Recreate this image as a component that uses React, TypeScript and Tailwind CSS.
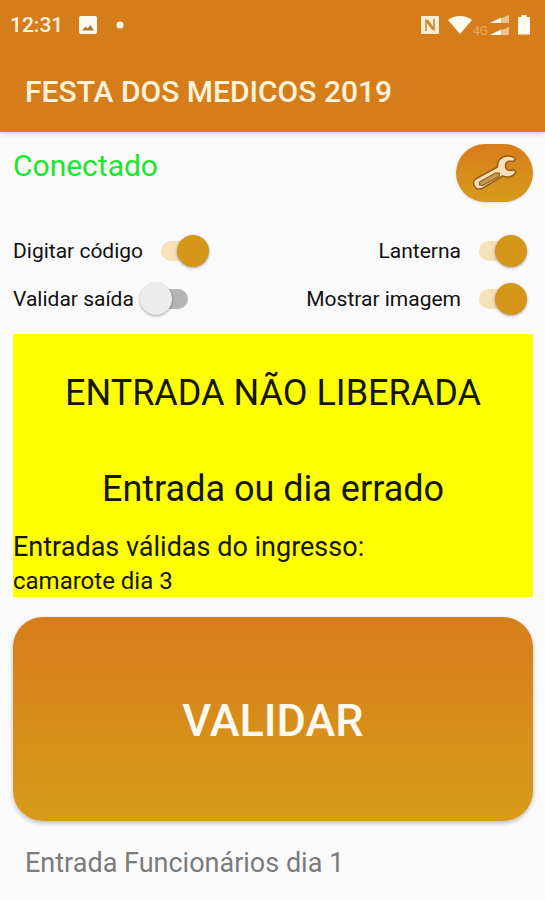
import { useState } from "react";

const switches = [
  { id: "digitar", label: "Digitar código", on: true, side: "justify-start" },
  { id: "lanterna", label: "Lanterna", on: true, side: "justify-end" },
  { id: "saida", label: "Validar saída", on: false, side: "justify-start" },
  { id: "imagem", label: "Mostrar imagem", on: true, side: "justify-end" },
];

const StatusBar = () => {
  return (
    <div className="flex h-[50px] items-center justify-between pl-[10px] pr-[14px] text-white">
      <div className="flex items-center gap-4">
        <span className="text-[21px] leading-6 font-medium text-[#fff3dc]">12:31</span>
        <svg width="18" height="18" viewBox="0 0 18 18">
          <rect width="18" height="18" rx="2" fill="#fffaf0" />
          <path d="M3 14.500l3.500-4 2 2 3-3.500 3.500 5.500z" fill="#a8763a" />
        </svg>
        <svg width="12" height="20" viewBox="0 0 12 20">
          <circle cx="7" cy="10" r="3.500" fill="#fffaf0" />
        </svg>
      </div>

      <div className="flex items-center">
        <svg width="18" height="18" viewBox="0 0 18 18" fill="none">
          <rect width="18" height="18" rx="1" fill="#ffeed2" />
          <path d="M5 15V4.500l7 9" stroke="#c98434" strokeWidth="1.500" />
          <path d="M13 3v10.500L6.500 4" stroke="#c98434" strokeWidth="1.500" />
        </svg>
        <svg className="ml-2" width="26" height="20" viewBox="0 0 26 20">
          <path d="M13 19L1 5C4.500 2.500 8.500 1 13 1s8.500 1.500 12 4z" fill="#fffaf0" />
        </svg>
        <span className="pt-3 text-xs leading-4 text-[#e9a868]">4G</span>
        <svg className="ml-0.5" width="19" height="22" viewBox="0 0 19 22">
          <path d="M0 9L19 1v8z" fill="#f0c08e" />
          <path d="M0 9l11-5.500V9z" fill="#fffaf0" />
          <path d="M0 21l19-8v8z" fill="#f0c08e" />
          <path d="M0 21l11-5.500V21z" fill="#fffaf0" />
        </svg>
        <svg className="ml-2" width="14" height="20" viewBox="0 0 14 20">
          <path d="M4.500 0h5v2H13v17.500H1V2h3.500z" fill="#fffaf0" />
        </svg>
      </div>
    </div>
  );
};

const WrenchIcon = () => {
  return (
    <svg width="48" height="38" viewBox="0 0 48 38" strokeLinejoin="round">
      <path
        d="M4.500 25L26.500 13C26 6.500 30 2.500 36 2c3.500-.3 6.500.5 8.500 3l-1.500 2-5 .3c-2.500.7-3.500 2-3.500 4.200 0 3 1.500 4.500 4 5l5-.5 1.500 2c-3 5-8 6-13.500 4L11 34.500c-4.500 1.500-7.500-.5-8.300-4-.4-2.500.3-4.500 1.800-5.500z"
        fill="#f8dfb8"
        stroke="#93601c"
        strokeWidth="1.500"
      />
      <path
        d="M8.500 28l16-9 4 .2-.5 3.300L11.500 31.500l-3-.7z"
        fill="#c79a4e"
        stroke="#93601c"
        strokeWidth="1.200"
      />
    </svg>
  );
};

const Switch = ({ id, label, on, side }: (typeof switches)[number]) => {
  const [checked, setChecked] = useState(on);

  return (
    <div className={`flex h-12 items-center ${side}`}>
      <label htmlFor={id} className="text-[21px] leading-7 text-[#111]">
        {label}
      </label>
      <input
        id={id}
        type="checkbox"
        role="switch"
        checked={checked}
        onChange={(e) => setChecked(e.target.checked)}
        className="relative mx-1.5 h-8 w-15 shrink-0 appearance-none before:absolute before:inset-x-3 before:inset-y-1.5 before:rounded-full before:bg-[#b5b5b5] checked:before:bg-[#f7e1b9] after:absolute after:left-0 after:top-0 after:size-8 after:rounded-full after:bg-[#ececec] after:shadow-[0_1px_3px_rgba(0,0,0,0.35)] checked:after:left-7 checked:after:bg-[#d6961a]"
      />
    </div>
  );
};

const App = () => {
  return (
    <div className="min-h-screen bg-[#fafafa] font-[Roboto,sans-serif]">
      <header className="bg-[#d67d1b] shadow-[0_1px_6px_rgba(0,0,0,0.2)]">
        <StatusBar />
        <h1 className="px-[25px] pt-6 pb-[22px] text-[30px] leading-9 font-medium text-[#fff3dc]">
          FESTA DOS MEDICOS 2019
        </h1>
      </header>

      <main className="pl-[13px] pr-3 pt-3">
        <div className="flex items-start justify-between">
          <p className="pt-1 text-[30px] leading-9 text-[#1be52c]">Conectado</p>
          <button
            type="button"
            aria-label="Configurações"
            className="flex h-[58px] w-[77px] items-center justify-center rounded-full bg-linear-to-b from-[#d67d1b] to-[#d79b1a] shadow-sm"
          >
            <WrenchIcon />
          </button>
        </div>

        <div className="grid grid-cols-2 pt-[25px] pb-[11px]">
          {switches.map((item) => (
            <Switch key={item.id} {...item} />
          ))}
        </div>

        <section className="bg-[#ffff00] pt-[35px] text-[#15150a]">
          <h2 className="text-center text-[36px] leading-12">ENTRADA NÃO LIBERADA</h2>
          <p className="pt-12 text-center text-[36px] leading-12">Entrada ou dia errado</p>
          <p className="pt-4 text-[27px] leading-9">Entradas válidas do ingresso:</p>
          <p className="text-2xl leading-8">camarote dia 3</p>
        </section>

        <button
          type="button"
          className="mt-5 h-[204px] w-full rounded-[30px] bg-linear-to-b from-[#d67d1b] to-[#d79b1a] pt-1 text-[45px] font-medium text-[#fffaf0] shadow-[0_2px_4px_rgba(0,0,0,0.25)]"
        >
          VALIDAR
        </button>

        <p className="px-3 pt-6 text-[27px] leading-9 text-[#7b7b7b]">
          Entrada Funcionários dia 1
        </p>
      </main>
    </div>
  );
};

export default App;
